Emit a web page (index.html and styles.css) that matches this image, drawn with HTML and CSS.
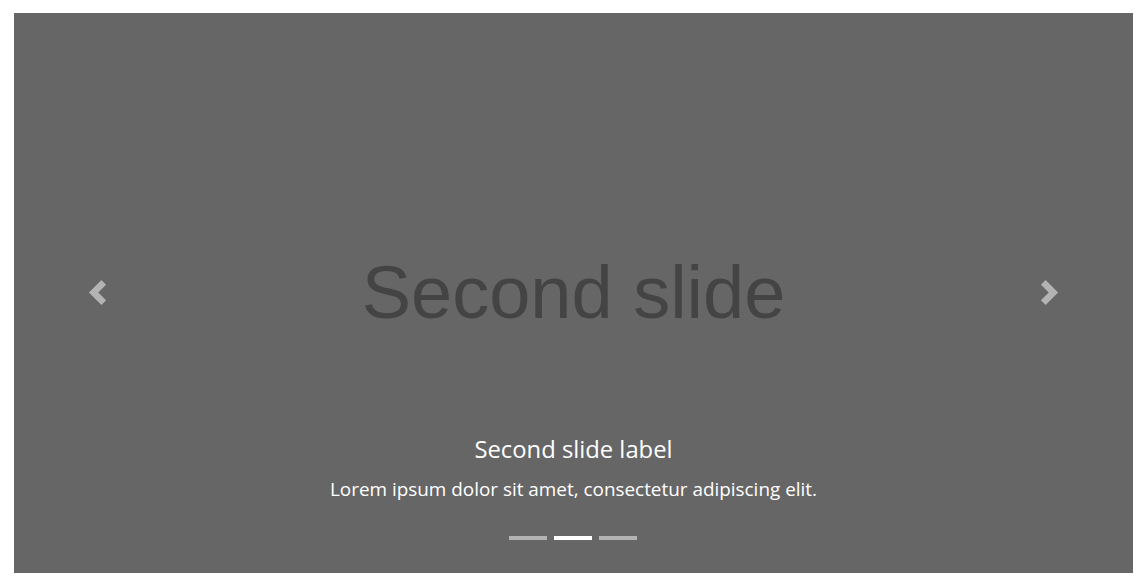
FILE: index.html
```html
<!DOCTYPE html>
<html lang="en">
<head>
<meta charset="utf-8">
<title>Carousel</title>
<link rel="stylesheet" href="styles.css">
</head>
<body>
<div class="page">
  <div class="carousel">
    <div class="slide">
      <span class="slide-text">Second slide</span>
    </div>
    <a class="control control-prev" href="#" aria-label="Previous">
      <svg class="control-icon" viewBox="0 0 8 8" width="25" height="25"><path d="M5.25 0l-4 4 4 4 1.5-1.5L4.25 4l2.5-2.5L5.25 0z"/></svg>
    </a>
    <a class="control control-next" href="#" aria-label="Next">
      <svg class="control-icon" viewBox="0 0 8 8" width="25" height="25"><path d="M2.75 0l-1.5 1.5L3.75 4l-2.5 2.5L2.75 8l4-4-4-4z"/></svg>
    </a>
    <div class="caption">
      <h5 class="caption-title">Second slide label</h5>
      <p class="caption-text">Lorem ipsum dolor sit amet, consectetur adipiscing elit.</p>
    </div>
    <ol class="indicators">
      <li class="indicator"></li>
      <li class="indicator active"></li>
      <li class="indicator"></li>
    </ol>
  </div>
</div>
</body>
</html>
```
FILE: styles.css
```css
html, body {
  margin: 0;
  padding: 0;
  background: #fff;
}
.page {
  padding: 13px 14px 15px 14px;
}
.carousel {
  position: relative;
  height: 560px;
  background: #666;
  overflow: hidden;
}
.slide {
  height: 100%;
  display: flex;
  align-items: center;
  justify-content: center;
}
.slide-text {
  font-family: "Liberation Sans", Arial, sans-serif;
  font-size: 74px;
  line-height: 1;
  color: #444;
  margin-top: 0;
}
.control {
  position: absolute;
  top: 0;
  bottom: 0;
  width: 15%;
  display: flex;
  align-items: center;
  justify-content: center;
  opacity: 0.5;
}
.control-prev { left: 0; }
.control-next { right: 0; }
.control-icon {
  fill: #fff;
  display: block;
  margin-top: -2px;
}
.caption {
  position: absolute;
  left: 15%;
  right: 15%;
  bottom: 24px;
  padding: 25px 0;
  text-align: center;
  color: #fff;
  font-family: "Open Sans", "Noto Sans", sans-serif;
}
.caption-title {
  margin: 0 0 10px;
  font-size: 23.8px;
  font-weight: 400;
  line-height: 30px;
}
.caption-text {
  margin: 0 0 20px;
  font-size: 18.9px;
  line-height: 30px;
}
.indicators {
  position: absolute;
  left: 0;
  right: 0;
  bottom: 33px;
  margin: 0;
  padding: 0 1px 0 0;
  list-style: none;
  display: flex;
  justify-content: center;
  gap: 7px;
}
.indicator {
  width: 38px;
  height: 4px;
  background: #fff;
  opacity: 0.5;
}
.indicator.active {
  opacity: 1;
}
```
